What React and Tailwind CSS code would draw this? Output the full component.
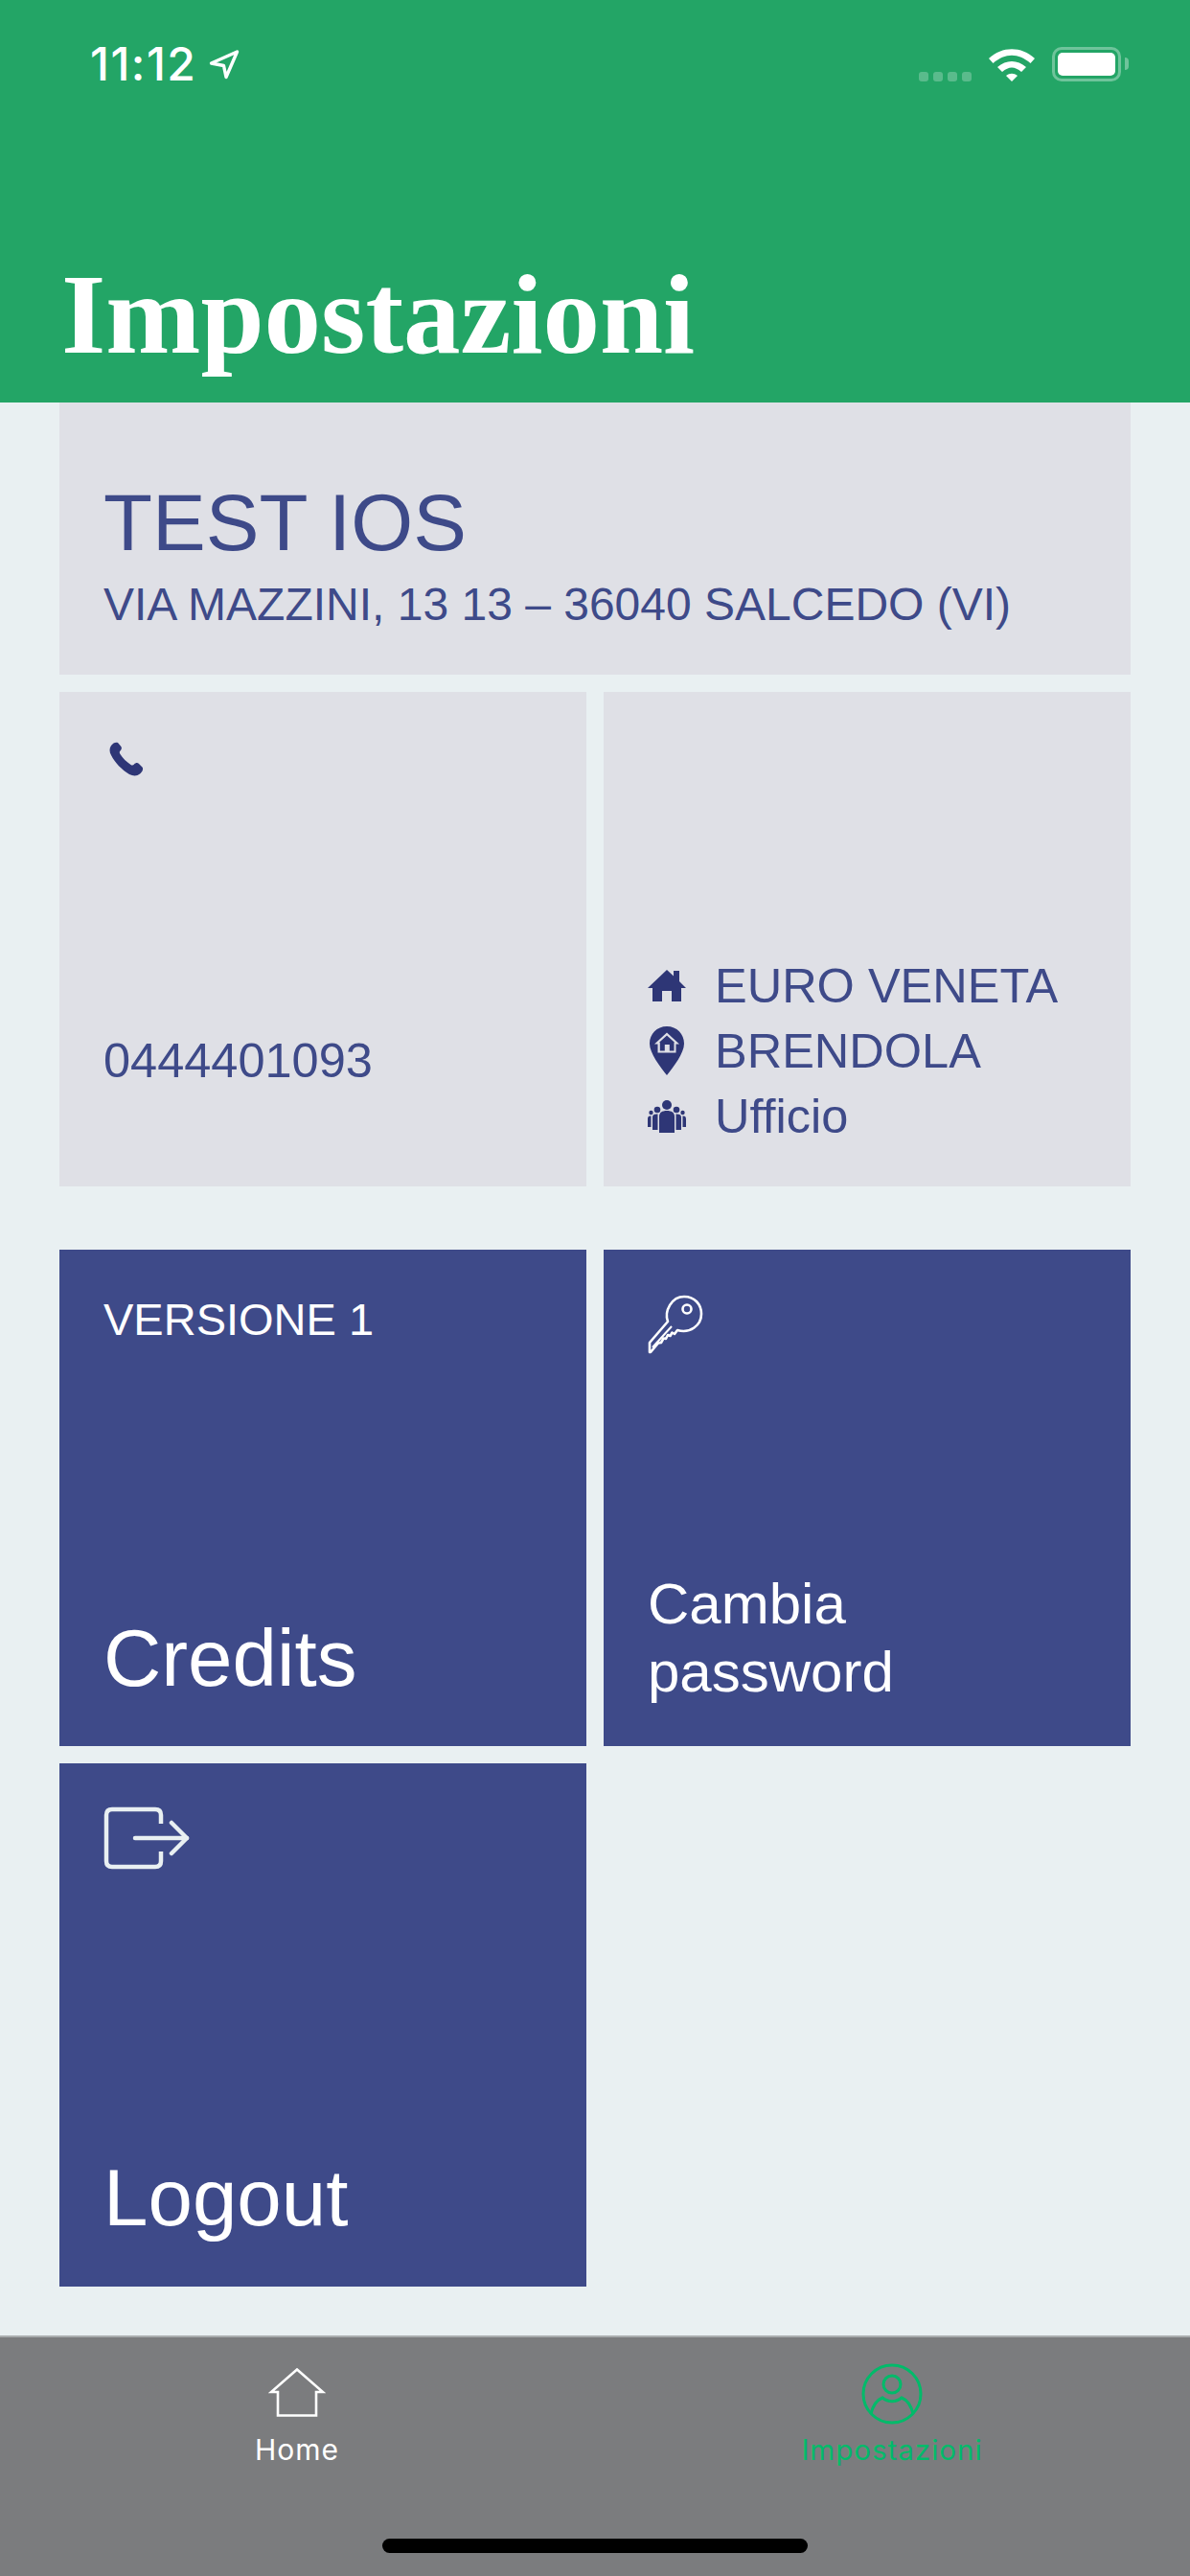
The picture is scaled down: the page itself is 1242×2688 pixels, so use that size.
import React from 'react';

const sans = "font-['Liberation_Sans',Arial,sans-serif]";

function LocationArrow() {
  return (
    <svg width="32" height="32" viewBox="0 0 32 32" fill="none" stroke="white" strokeWidth="3.4" strokeLinejoin="round">
      <path d="M2.5 15 L29.5 3 L18 29.5 L15.5 17.5 Z" />
    </svg>
  );
}

function StatusIcons() {
  return (
    <div className="flex items-end mb-[6px]">
      <div className="flex gap-[5px] mr-[17px]">
        {[0, 1, 2, 3].map((i) => (
          <span key={i} className="w-[10px] h-[10px] rounded-[3px] bg-white/25" />
        ))}
      </div>
      <svg width="50" height="36" viewBox="0 0 50 36" fill="white" className="mr-[17px]">
        <path d="M1 12 C15 -1 35 -1 49 12 L44.5 17 C32 6 18 6 5.5 17 Z" />
        <path d="M10 21 C19 13 31 13 40 21 L35 26 C28 20 22 20 15 26 Z" />
        <path d="M19 30 C23 27 27 27 31 30 L25 36 Z" />
      </svg>
      <div className="relative w-[72px] h-[36px] rounded-[10px] border-[3px] border-white/35 p-[3px] mr-[8px]">
        <div className="w-full h-full rounded-[5px] bg-white" />
        <span className="absolute -right-[11px] top-[8px] w-[4px] h-[13px] rounded-r-[4px] bg-white/35" />
      </div>
    </div>
  );
}

function PhoneIcon() {
  return (
    <svg width="40" height="40" viewBox="0 0 40 40" fill="#2e3676" className="ml-[3px] mt-[6px]">
      <path d="M5 6 C7 3 10 2 12 3 L15 6.5 C16.5 8 16 10 14.5 11.5 C13.5 12.5 13.5 13.5 14.5 15 C17 19 21 23 25.5 26 C27 27 28 26.5 29 25.5 C30.5 24 32.5 23.5 34 25 L37.5 28.5 C39 30.5 37.5 33.5 35 35.5 C32 38 28 38 24 36 C16 31 9 24 5 16 C3 12.5 3 9 5 6 Z" />
    </svg>
  );
}

function HouseSolid() {
  return (
    <svg width="40" height="34" viewBox="0 0 40 34" fill="#2e3676">
      <path d="M20 0 L27 6.500 V1 H33 V12 L40 19 H35 V33 H25 V22 H15 V33 H5 V19 H0 Z" />
    </svg>
  );
}

function PinHome() {
  return (
    <svg width="38" height="52" viewBox="0 0 38 52" fill="#2e3676">
      <path d="M19 0 C29.500 0 37 8 37 18 C37 28 26 42 19 51 C12 42 1 28 1 18 C1 8 8.500 0 19 0 Z" />
      <path d="M19 6.500 L32 18.500 H28.500 V27.500 H9.500 V18.500 H6 Z M19 9.500 L11 16.800 H11.800 V25.500 H16.800 V19 H21.800 V25.500 H26.500 V16.800 H27 Z" fill="#dfe0e6" fillRule="evenodd" />
    </svg>
  );
}

function People() {
  return (
    <svg width="40" height="34" viewBox="0 0 40 34" fill="#2e3676">
      <circle cx="20" cy="5" r="5" />
      <path d="M12 17 C12 13 15 11 20 11 C25 11 28 13 28 17 V34 H12 Z" />
      <circle cx="10" cy="10" r="3.300" />
      <circle cx="30" cy="10" r="3.300" />
      <path d="M5 18 C5 15 7 14.500 10.500 14.500 V31 H5 Z M29.500 14.500 C33 14.500 35 15 35 18 V31 H29.500 Z" />
      <circle cx="3.500" cy="13" r="2.200" />
      <circle cx="36.500" cy="13" r="2.200" />
      <path d="M0 20 C0 17 1 16.500 3.500 16.500 V28 H0 Z M36.500 16.500 C39 16.500 40 17 40 20 V28 H36.500 Z" />
    </svg>
  );
}

function KeyIcon() {
  return (
    <svg width="58" height="62" viewBox="0 0 58 62" fill="none" stroke="white" strokeWidth="2.600" strokeLinejoin="round" className="mt-[3px]">
      <path d="M21 28 C17 17 25 2 38 2 C49 2 56 10 56 20 C56 32 44 41 31 37 L28 41 L25.500 39.500 L23.500 43 L21 42 L19 46 L16.500 45.500 L14 50 L11 50.500 L3 60 H2 V50 Z" />
      <path d="M5 55 L25 33" strokeWidth="2" />
      <circle cx="41" cy="15" r="4.500" />
    </svg>
  );
}

function LogoutIcon() {
  return (
    <svg width="90" height="66" viewBox="0 0 90 66" fill="none" stroke="#e9f0f2" strokeWidth="4.500" strokeLinecap="round" strokeLinejoin="round" className="mt-[1px]">
      <path d="M60 18 V9 Q60 3 54 3 H9 Q3 3 3 9 V57 Q3 63 9 63 H54 Q60 63 60 57 V47" strokeLinecap="butt" />
      <path d="M33 33 H87" />
      <path d="M71 17 L87 33 L71 49" />
    </svg>
  );
}

function HomeTabIcon() {
  return (
    <svg width="60" height="52" viewBox="0 0 60 52" fill="none" stroke="white" strokeWidth="2.600">
      <path d="M30 1.500 L57 25 H50 V49.500 H10 V25 H3 Z" />
    </svg>
  );
}

function UserTabIcon() {
  return (
    <svg width="64" height="64" viewBox="0 0 64 64" fill="none" stroke="#00bb6a" strokeWidth="3">
      <circle cx="32" cy="32" r="30" />
      <circle cx="32" cy="22" r="9" />
      <path d="M10 53 C12 44 17 38 22 36 C28 41 36 41 42 36 C47 38 52 44 54 53" />
    </svg>
  );
}

function Tile({ className, children }) {
  return <div className={`p-[46px] pt-[44px] flex flex-col justify-between ${className}`}>{children}</div>;
}

export default function App() {
  return (
    <div className={`w-[1242px] h-[2688px] bg-[#e9f0f2] flex flex-col ${sans}`}>
      {/* Header */}
      <header className="h-[420px] bg-[#23a566] px-[64px] flex flex-col justify-between">
        <div className="flex justify-between items-end pt-[43px]">
          <div className="flex items-center gap-[13px] pl-[30px]">
            <span className="font-['Inter',sans-serif] text-[48px] leading-[48px] font-medium tracking-[1.500px] text-white">11:12</span>
            <LocationArrow />
          </div>
          <StatusIcons />
        </div>
        <h1 className="font-['Liberation_Serif',serif] font-bold text-[119px] leading-[119px] text-white pb-[32px]">Impostazioni</h1>
      </header>

      {/* Content */}
      <main className="flex-1 px-[62px]">
        <div className="h-[284px] bg-[#dfe0e6] px-[46px] pt-[83px] text-[#3e4a89]">
          <div className="text-[83.500px] leading-[84px]">TEST IOS</div>
          <div className="text-[48px] leading-[56px] mt-[16px] whitespace-nowrap">VIA MAZZINI, 13 13 – 36040 SALCEDO (VI)</div>
        </div>

        <div className="grid grid-cols-2 gap-[18px] mt-[18px]">
          <Tile className="h-[516px] bg-[#dfe0e6]">
            <PhoneIcon />
            <div className="text-[50.500px] leading-[56px] text-[#3e4a89] pb-[57px]">0444401093</div>
          </Tile>
          <Tile className="h-[516px] bg-[#dfe0e6] !justify-end">
            <div className="flex flex-col gap-[11px] text-[50.500px] leading-[57px] text-[#3e4a89] -mb-[1px]">
              <div className="flex items-center gap-[30px]"><span className="w-[40px] flex justify-center"><HouseSolid /></span>EURO VENETA</div>
              <div className="flex items-center gap-[30px]"><span className="w-[40px] flex justify-center"><PinHome /></span>BRENDOLA</div>
              <div className="flex items-center gap-[30px]"><span className="w-[40px] flex justify-center"><People /></span>Ufficio</div>
            </div>
          </Tile>
        </div>

        <div className="grid grid-cols-2 gap-[18px] mt-[66px] text-white">
          <Tile className="h-[518px] bg-[#3e4a89]">
            <div className="text-[47px] leading-[56px] mt-[1px]">VERSIONE 1</div>
            <div className="text-[83.500px] leading-[96px] -mb-[2px]">Credits</div>
          </Tile>
          <Tile className="h-[518px] bg-[#3e4a89]">
            <KeyIcon />
            <div className="text-[60px] leading-[71px] -mb-[4px]">Cambia<br />password</div>
          </Tile>
          <Tile className="h-[546px] bg-[#3e4a89]">
            <LogoutIcon />
            <div className="text-[83.500px] leading-[96px] -mb-[1px]">Logout</div>
          </Tile>
        </div>
      </main>

      {/* Tab bar */}
      <nav className="relative h-[251px] bg-[#7b7c7e] border-t-2 border-[#a9adae] flex">
        <div className="w-[620px] flex flex-col items-center pt-[32px]">
          <HomeTabIcon />
          <span className="font-['Inter',sans-serif] text-[30px] leading-[36px] text-white mt-[15px] tracking-[1px]">Home</span>
        </div>
        <div className="w-[622px] flex flex-col items-center pt-[27px]">
          <UserTabIcon />
          <span className="font-['Inter',sans-serif] text-[29.500px] leading-[36px] text-[#00bb6a] mt-[8px] tracking-[1px]">Impostazioni</span>
        </div>
        <span className="absolute left-[399px] bottom-[24px] w-[444px] h-[15px] rounded-full bg-black" />
      </nav>
    </div>
  );
}
